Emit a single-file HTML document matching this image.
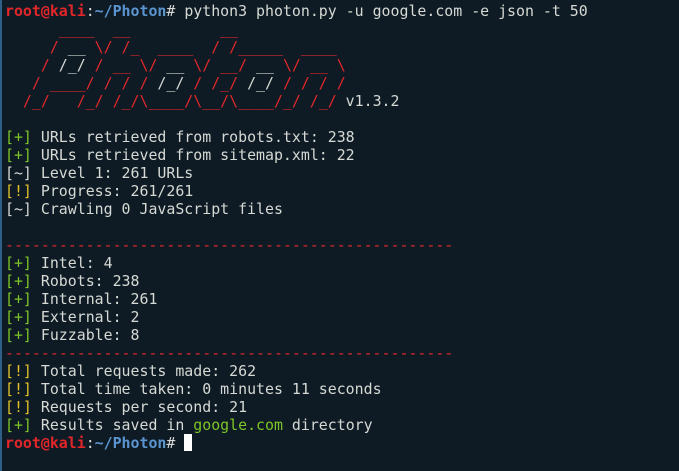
<!DOCTYPE html>
<html><head><meta charset="utf-8"><style>
html,body{margin:0;padding:0;}
body{width:679px;height:471px;overflow:hidden;background:#0e1b25;position:relative;}
.strip{position:absolute;left:0;top:0;width:2px;height:471px;background:#2f5f86;}
pre{margin:0;position:absolute;left:5px;top:2px;font-family:"DejaVu Sans Mono","Liberation Mono",monospace;font-size:14.9px;line-height:18px;color:#d6d9d4;white-space:pre;}
.r{color:#e3262a;font-weight:bold}
.b{color:#5b95cf;font-weight:bold}
.a{color:#e0282a}
.w{color:#d6d9d4}
.g{color:#7dc528}
.y{color:#e3c329}
.d{color:#e0282a}
.cur{display:inline-block;width:8px;height:17px;background:#fff;vertical-align:-3px;}
</style></head><body><div class="strip"></div>
<pre><span class="r">root@kali</span>:<span class="b">~/Photon</span># python3 photon.py -u google.com -e json -t 50
<span class="a">      ____  __          __
     / <span class="w">__</span> \/ /_  ____  / /_____  ____
    / <span class="w">/_/</span> / __ \/ <span class="w">__</span> \/ __/ <span class="w">__</span> \/ __ \
   / ____/ / / / <span class="w">/_/</span> / /_/ <span class="w">/_/</span> / / / /
  /_/   /_/ /_/\____/\__/\____/_/ /_/ </span>v1.3.2

<span class="g">[+]</span> URLs retrieved from robots.txt: 238
<span class="g">[+]</span> URLs retrieved from sitemap.xml: 22
[~] Level 1: 261 URLs
<span class="y">[!]</span> Progress: 261/261
[~] Crawling 0 JavaScript files

<span class="d">--------------------------------------------------</span>
<span class="g">[+]</span> Intel: 4
<span class="g">[+]</span> Robots: 238
<span class="g">[+]</span> Internal: 261
<span class="g">[+]</span> External: 2
<span class="g">[+]</span> Fuzzable: 8
<span class="d">--------------------------------------------------</span>
<span class="y">[!]</span> Total requests made: 262
<span class="y">[!]</span> Total time taken: 0 minutes 11 seconds
<span class="y">[!]</span> Requests per second: 21
<span class="g">[+]</span> Results saved in <span class="g">google.com</span> directory
<span class="r">root@kali</span>:<span class="b">~/Photon</span># <span class="cur"></span></pre>
</body></html>
